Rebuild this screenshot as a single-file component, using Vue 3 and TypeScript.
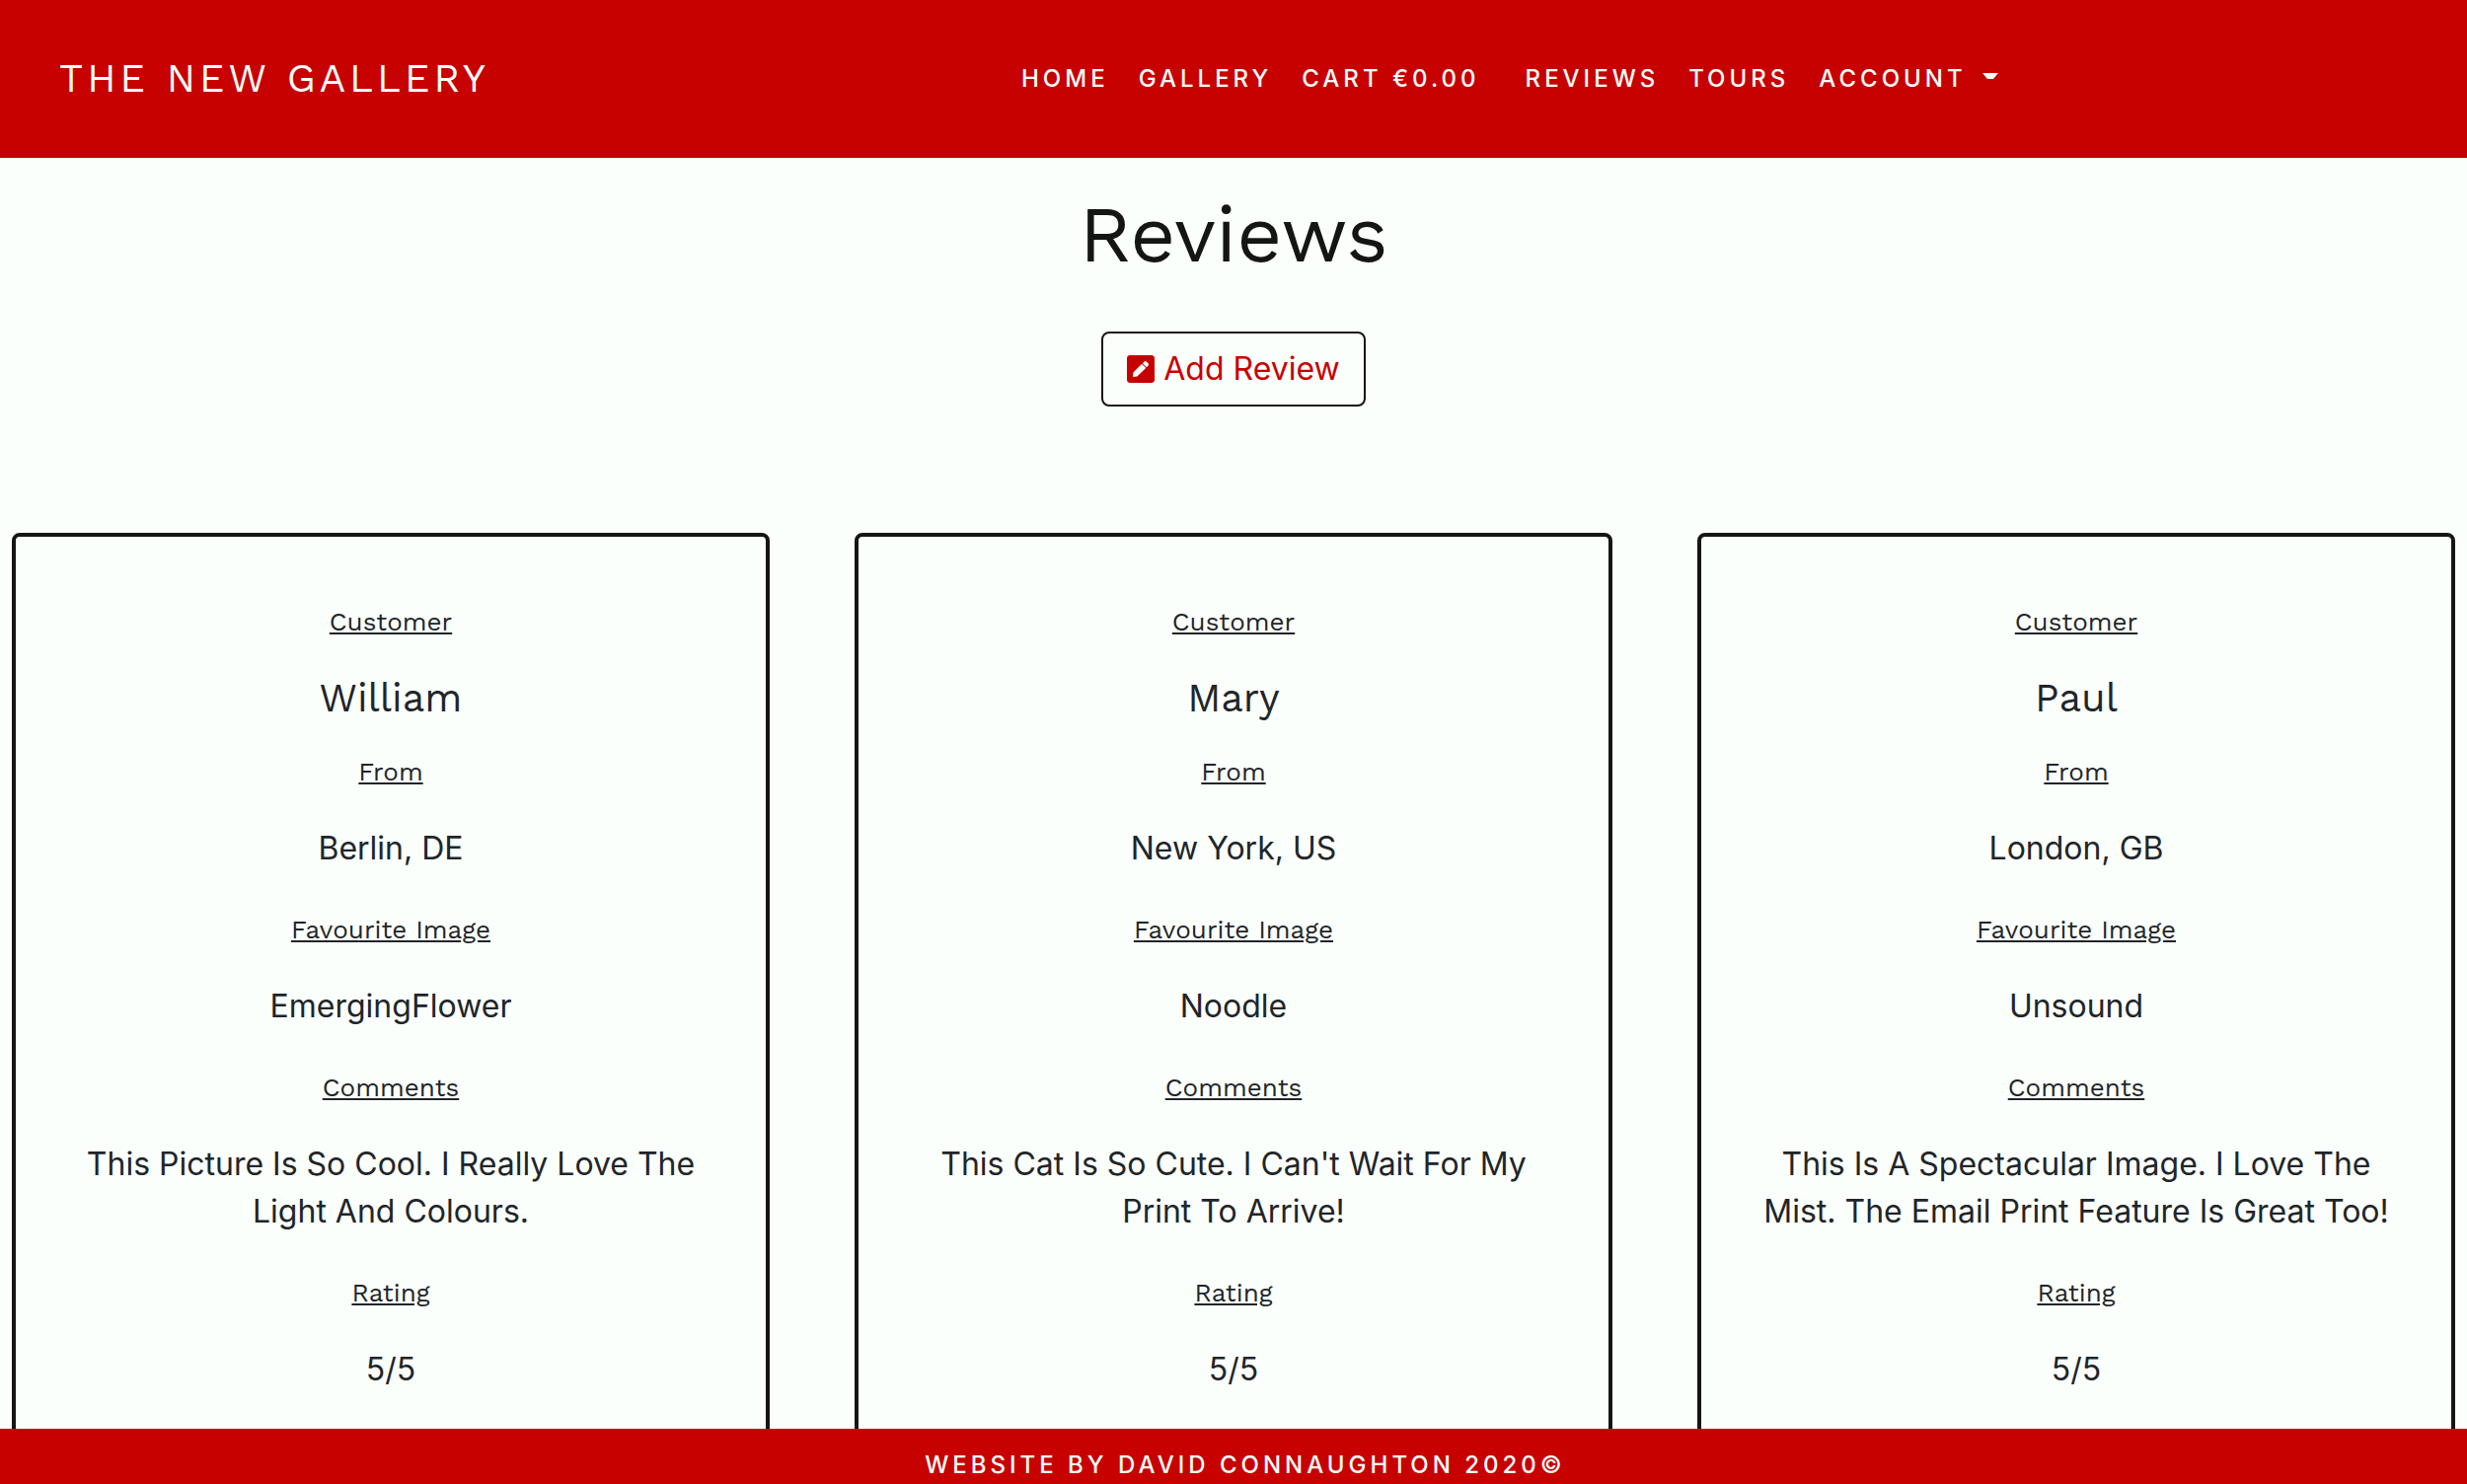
<script setup lang="ts">
interface NavItem {
  label: string
  wide?: boolean
}

interface Review {
  customer: string
  from: string
  image: string
  comments: string
  rating: string
}

const navItems: NavItem[] = [
  { label: 'Home' },
  { label: 'Gallery' },
  { label: 'Cart €0.00', wide: true },
  { label: 'Reviews' },
  { label: 'Tours' },
]

const reviews: Review[] = [
  {
    customer: 'William',
    from: 'Berlin, DE',
    image: 'EmergingFlower',
    comments: 'This Picture Is So Cool. I Really Love The Light And Colours.',
    rating: '5/5',
  },
  {
    customer: 'Mary',
    from: 'New York, US',
    image: 'Noodle',
    comments: "This Cat Is So Cute. I Can't Wait For My Print To Arrive!",
    rating: '5/5',
  },
  {
    customer: 'Paul',
    from: 'London, GB',
    image: 'Unsound',
    comments: 'This Is A Spectacular Image. I Love The Mist. The Email Print Feature Is Great Too!',
    rating: '5/5',
  },
]
</script>

<template>
  <div class="page">
    <header class="site-header">
      <a class="brand" href="#">The New Gallery</a>
      <nav class="nav">
        <a
          v-for="item in navItems"
          :key="item.label"
          class="nav-link"
          :class="{ 'nav-link-wide': item.wide }"
          href="#"
        >{{ item.label }}</a>
        <button class="nav-link account" type="button">
          Account
          <span class="caret"></span>
        </button>
      </nav>
    </header>

    <main class="content">
      <h1 class="title">Reviews</h1>
      <button class="add-review" type="button">
        <svg class="pen" viewBox="0 32 448 448" aria-hidden="true">
          <path
            d="M400 480H48c-26.5 0-48-21.5-48-48V80c0-26.5 21.5-48 48-48h352c26.5 0 48 21.5 48 48v352c0 26.5-21.5 48-48 48zM238.1 177.9L102.4 313.6l-6.3 57.1c-.8 7.6 5.6 14.1 13.3 13.3l57.1-6.3L302.2 242c2.3-2.3 2.3-6.1 0-8.5L246.7 178c-2.5-2.4-6.3-2.4-8.6-.1zM345 165.1L314.9 135c-9.4-9.4-24.6-9.4-33.9 0l-23.1 23.1c-2.3 2.3-2.3 6.1 0 8.5l55.5 55.5c2.3 2.3 6.1 2.3 8.5 0L345 199c9.3-9.3 9.3-24.5 0-33.9z"
          />
        </svg>
        Add Review
      </button>

      <section class="reviews">
        <article v-for="review in reviews" :key="review.customer" class="card">
          <h2 class="label">Customer</h2>
          <p class="name">{{ review.customer }}</p>
          <h2 class="label">From</h2>
          <p class="value">{{ review.from }}</p>
          <h2 class="label">Favourite Image</h2>
          <p class="value">{{ review.image }}</p>
          <h2 class="label">Comments</h2>
          <p class="value">{{ review.comments }}</p>
          <h2 class="label">Rating</h2>
          <p class="value">{{ review.rating }}</p>
        </article>
      </section>
    </main>

    <footer class="site-footer">Website by David Connaughton 2020©</footer>
  </div>
</template>

<style>
body {
  margin: 0;
  background: #fbfffc;
}
</style>

<style scoped>
.page {
  display: flex;
  flex-direction: column;
  height: 100vh;
  font-family: Inter, 'Liberation Sans', sans-serif;
  font-size: 32px;
  line-height: 48px;
  color: #212529;
  background: #fbfffc;
}

.site-header {
  display: grid;
  grid-template-columns: 2fr 3fr;
  align-items: center;
  flex: none;
  height: 160px;
  box-sizing: border-box;
  padding: 0 40px 0 60px;
  background: #c70000;
}

.brand {
  font-family: 'Work Sans', Inter, sans-serif;
  font-size: 40px;
  letter-spacing: 4px;
  text-transform: uppercase;
  text-decoration: none;
  color: #fbfffc;
}

.nav {
  display: flex;
  align-items: center;
}

.nav-link {
  padding: 0 15px;
  border: 0;
  background: none;
  font-family: inherit;
  font-size: 24px;
  font-weight: 500;
  line-height: 48px;
  letter-spacing: 4px;
  text-transform: uppercase;
  text-decoration: none;
  white-space: nowrap;
  color: #fbfffc;
}

.nav-link-wide {
  padding-right: 31px;
}

.account {
  display: flex;
  align-items: center;
  gap: 16px;
}

.caret {
  width: 6px;
  border-top: 6px solid;
  border-right: 5px solid transparent;
  border-left: 5px solid transparent;
  margin-bottom: 6px;
}

.content {
  display: flex;
  flex-direction: column;
  align-items: center;
  flex: 1;
  min-height: 0;
  overflow-y: auto;
  scrollbar-width: none;
}

.title {
  margin: 30px 0 50px;
  font-family: 'Work Sans', Inter, sans-serif;
  font-size: 80px;
  font-weight: 400;
  line-height: 96px;
  color: #151613;
}

.add-review {
  display: flex;
  align-items: center;
  gap: 9px;
  flex: none;
  margin: 0 0 128px;
  padding: 12px 24px;
  border: 2px solid #151613;
  border-radius: 8px;
  background: #fbfffc;
  font-family: inherit;
  font-size: 32px;
  line-height: 48px;
  color: #c70000;
}

.pen {
  width: 28px;
  height: 28px;
  fill: currentColor;
}

.reviews {
  display: grid;
  grid-template-columns: repeat(3, 1fr);
  gap: 86px;
  width: 100%;
  box-sizing: border-box;
  padding: 0 12px 48px;
}

.card {
  padding: 66px 56px;
  border: 4px solid #151613;
  border-radius: 8px;
  text-align: center;
}

.label {
  margin: 0 0 34px;
  font-family: 'Work Sans', Inter, sans-serif;
  font-size: 26px;
  font-weight: 400;
  line-height: 40px;
  text-decoration: underline;
}

.name {
  margin: 0 0 30px;
  font-family: 'Work Sans', Inter, sans-serif;
  font-size: 40px;
  line-height: 48px;
}

.value {
  margin: 0 0 38px;
}

.site-footer {
  flex: none;
  height: 56px;
  box-sizing: border-box;
  padding: 13px 0 0 24px;
  overflow: hidden;
  font-size: 24px;
  font-weight: 500;
  letter-spacing: 4px;
  text-align: center;
  text-transform: uppercase;
  color: #fbfffc;
  background: #c70000;
}
</style>
